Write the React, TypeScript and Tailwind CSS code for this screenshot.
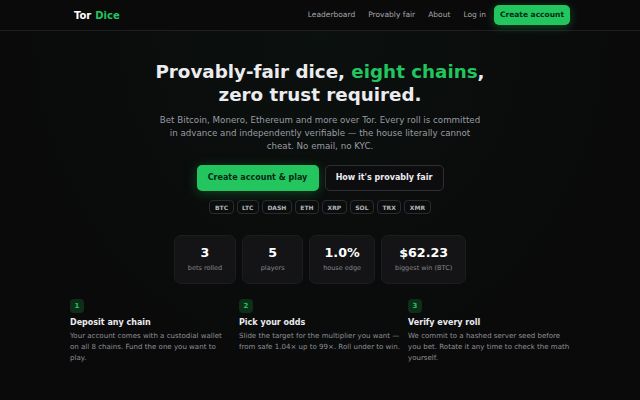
import React from 'react';

const chains = ['BTC', 'LTC', 'DASH', 'ETH', 'XRP', 'SOL', 'TRX', 'XMR'];

const stats = [
  { value: '3', label: 'bets rolled' },
  { value: '5', label: 'players' },
  { value: '1.0%', label: 'house edge' },
  { value: '$62.23', label: 'biggest win (BTC)' },
];

const steps = [
  {
    n: '1',
    title: 'Deposit any chain',
    body: 'Your account comes with a custodial wallet on all 8 chains. Fund the one you want to play.',
  },
  {
    n: '2',
    title: 'Pick your odds',
    body: 'Slide the target for the multiplier you want — from safe 1.04× up to 99×. Roll under to win.',
  },
  {
    n: '3',
    title: 'Verify every roll',
    body: 'We commit to a hashed server seed before you bet. Rotate it any time to check the math yourself.',
  },
];

const App: React.FC = () => {
  return (
    <div
      className="min-h-[400px] w-full bg-[#0a0a0b] text-[#e7e7ea]"
      style={{ fontFamily: '"DejaVu Sans", "Noto Sans", sans-serif' }}
    >
      <header className="h-[31px] border-b border-[#1e1f21]">
        <div className="flex h-full w-full items-center justify-between pl-[74px] pr-[70px]">
          <div className="flex items-center gap-[4px] text-[10px] font-bold">
            <span className="text-white">Tor</span>
            <span className="text-[#22c55e]">Dice</span>
          </div>
          <nav className="flex items-center text-[7.5px] text-[#a5a7ad]">
            <div className="flex items-center gap-[13px]">
              <a href="#">Leaderboard</a>
              <a href="#">Provably fair</a>
              <a href="#">About</a>
              <a href="#">Log in</a>
            </div>
            <button className="ml-[8px] h-[20px] w-[76px] rounded-[5px] bg-[#22c55e] text-[7.5px] font-bold text-[#062b14] shadow-[0_2px_10px_rgba(34,197,94,0.35)]">
              Create account
            </button>
          </nav>
        </div>
      </header>

      <main className="bg-[radial-gradient(ellipse_at_50%_0%,rgba(34,197,94,0.035),transparent_70%)]">
        <section className="flex flex-col items-center pt-[29px] text-center">
          <h1 className="text-[18.3px] font-bold leading-[23px] text-[#ececef]">
            Provably-fair dice, <span className="text-[#22c55e]">eight chains</span>,
            <br />
            zero trust required.
          </h1>
          <p className="mt-[8px] max-w-[330px] text-[8.7px] leading-[13px] text-[#9a9ca3]">
            Bet Bitcoin, Monero, Ethereum and more over Tor. Every roll is committed in advance and
            independently verifiable — the house literally cannot cheat. No email, no KYC.
          </p>

          <div className="mt-[12px] flex gap-[6px]">
            <button className="h-[26px] w-[122px] rounded-[5px] bg-[#22c55e] text-[8px] font-bold text-[#062b14] shadow-[0_2px_12px_rgba(34,197,94,0.3)]">
              Create account &amp; play
            </button>
            <button className="h-[26px] w-[119px] rounded-[5px] border border-[#2e2f33] bg-[#0d0d0f] text-[8px] font-bold text-[#ececef]">
              How it's provably fair
            </button>
          </div>

          <div className="mt-[9px] flex gap-[3px]">
            {chains.map((c) => (
              <span
                key={c}
                className="flex h-[14px] items-center rounded-[4px] border border-[#2a2b2f] px-[4.5px] text-[6px] font-bold text-[#b4b6bc]"
              >
                {c}
              </span>
            ))}
          </div>

          <div className="mt-[21px] flex gap-[6px]">
            {stats.map((s) => (
              <div
                key={s.label}
                className="flex h-[49px] min-w-[61px] flex-col items-center justify-center rounded-[7px] border border-[#1c1d20] bg-[#141416] px-[13px]"
              >
                <div className="text-[12.7px] font-bold leading-[15px] text-white">{s.value}</div>
                <div className="mt-[4px] text-[6.5px] text-[#84868c]">{s.label}</div>
              </div>
            ))}
          </div>
        </section>

        <section className="mx-auto mt-[15px] grid max-w-[500px] grid-cols-3 gap-[7px] pb-[30px]">
          {steps.map((s) => (
            <div key={s.n}>
              <div className="flex h-[14px] w-[14px] items-center justify-center rounded-[4px] bg-[#0f2e1a] text-[7px] font-bold text-[#22c55e]">
                {s.n}
              </div>
              <div className="mt-[4px] text-[8px] font-bold text-[#ececef]">{s.title}</div>
              <p className="mt-[1px] text-[7.05px] leading-[11px] text-[#8e9096]">{s.body}</p>
            </div>
          ))}
        </section>
      </main>
    </div>
  );
};

export default App;
